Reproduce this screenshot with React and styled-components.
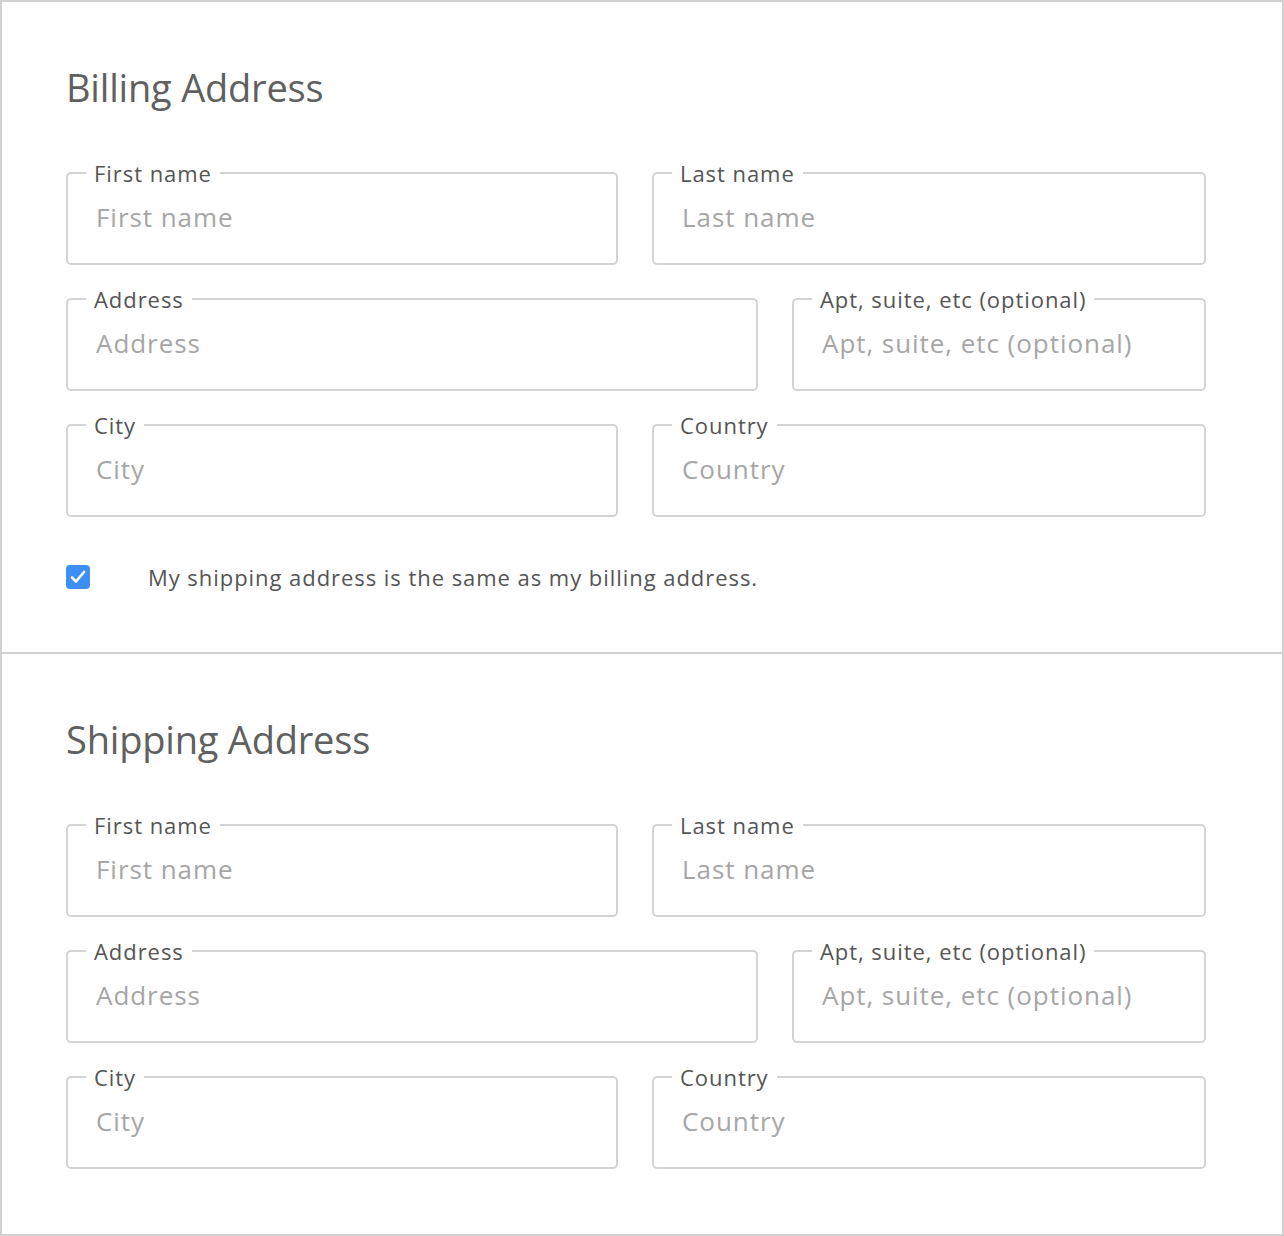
import React from 'react';
import styled, { createGlobalStyle } from 'styled-components';

const GlobalStyle = createGlobalStyle`
    html, body {
        margin: 0;
        padding: 0;
        background: #fff;
    }
    * {
        box-sizing: border-box;
    }
`;

const Card = styled.div`
    width: 1284px;
    height: 1236px;
    border: 2px solid #d0d0d0;
    font-family: "Open Sans", "Liberation Sans", sans-serif;
    background: #fff;
`;

const Section = styled.section`
    padding: 62px 76px ${p => (p.$last ? '64px' : '61px')} 64px;
    border-bottom: ${p => (p.$last ? 'none' : '2px solid #d0d0d0')};
`;

const Heading = styled.h2`
    margin: 0 0 50px;
    font-size: 38px;
    line-height: 46px;
    font-weight: 400;
    color: #606060;
    letter-spacing: -0.2px;
`;

const Rows = styled.div`
    display: flex;
    flex-direction: column;
    gap: 21px;
`;

const Row = styled.div`
    display: grid;
    grid-template-columns: ${p => p.$cols};
    column-gap: 34px;
`;

const Field = styled.fieldset`
    margin: 0;
    padding: 0 20px 0 28px;
    border: 2px solid #d3d3d3;
    border-radius: 5px;
    min-width: 0;
    height: 105px;
`;

const Legend = styled.legend`
    margin-left: -10px;
    padding: 0 8px;
    font-size: 22px;
    line-height: 26px;
    letter-spacing: 0.95px;
    color: #555;
`;

const Input = styled.input`
    display: block;
    width: 100%;
    margin: 7px 0 0;
    padding: 0;
    border: none;
    outline: none;
    height: 48px;
    font-family: inherit;
    font-size: 26px;
    letter-spacing: 0.95px;
    color: #555;
    background: transparent;

    &::placeholder {
        color: #a6a6a6;
    }
`;

const CheckRow = styled.label`
    display: flex;
    align-items: center;
    margin-top: 46px;
    height: 28px;
`;

const Box = styled.span`
    width: 24px;
    height: 24px;
    border-radius: 4px;
    background: #3d8ef5;
    display: flex;
    align-items: center;
    justify-content: center;
    flex-shrink: 0;
`;

const CheckText = styled.span`
    margin-left: 58px;
    font-size: 22px;
    letter-spacing: 0.95px;
    color: #555;
`;

const Check = () => (
    <Box>
        <svg width="24" height="24" viewBox="0 0 24 24">
            <path d="M6 12.5 L10 16.5 L18 7" fill="none" stroke="#fff" strokeWidth="2.6" strokeLinecap="round" strokeLinejoin="round" />
        </svg>
    </Box>
);

const InputField = ({ label }) => (
    <Field>
        <Legend>{label}</Legend>
        <Input placeholder={label} />
    </Field>
);

const AddressForm = ({ title, last, children }) => (
    <Section $last={last}>
        <Heading>{title}</Heading>
        <Rows>
            <Row $cols="552px 1fr">
                <InputField label="First name" />
                <InputField label="Last name" />
            </Row>
            <Row $cols="692px 1fr">
                <InputField label="Address" />
                <InputField label="Apt, suite, etc (optional)" />
            </Row>
            <Row $cols="552px 1fr">
                <InputField label="City" />
                <InputField label="Country" />
            </Row>
        </Rows>
        {children}
    </Section>
);

export default function App() {
    return (
        <>
            <GlobalStyle />
            <Card>
                <AddressForm title="Billing Address">
                    <CheckRow>
                        <Check />
                        <CheckText>My shipping address is the same as my billing address.</CheckText>
                    </CheckRow>
                </AddressForm>
                <AddressForm title="Shipping Address" last />
            </Card>
        </>
    );
}
